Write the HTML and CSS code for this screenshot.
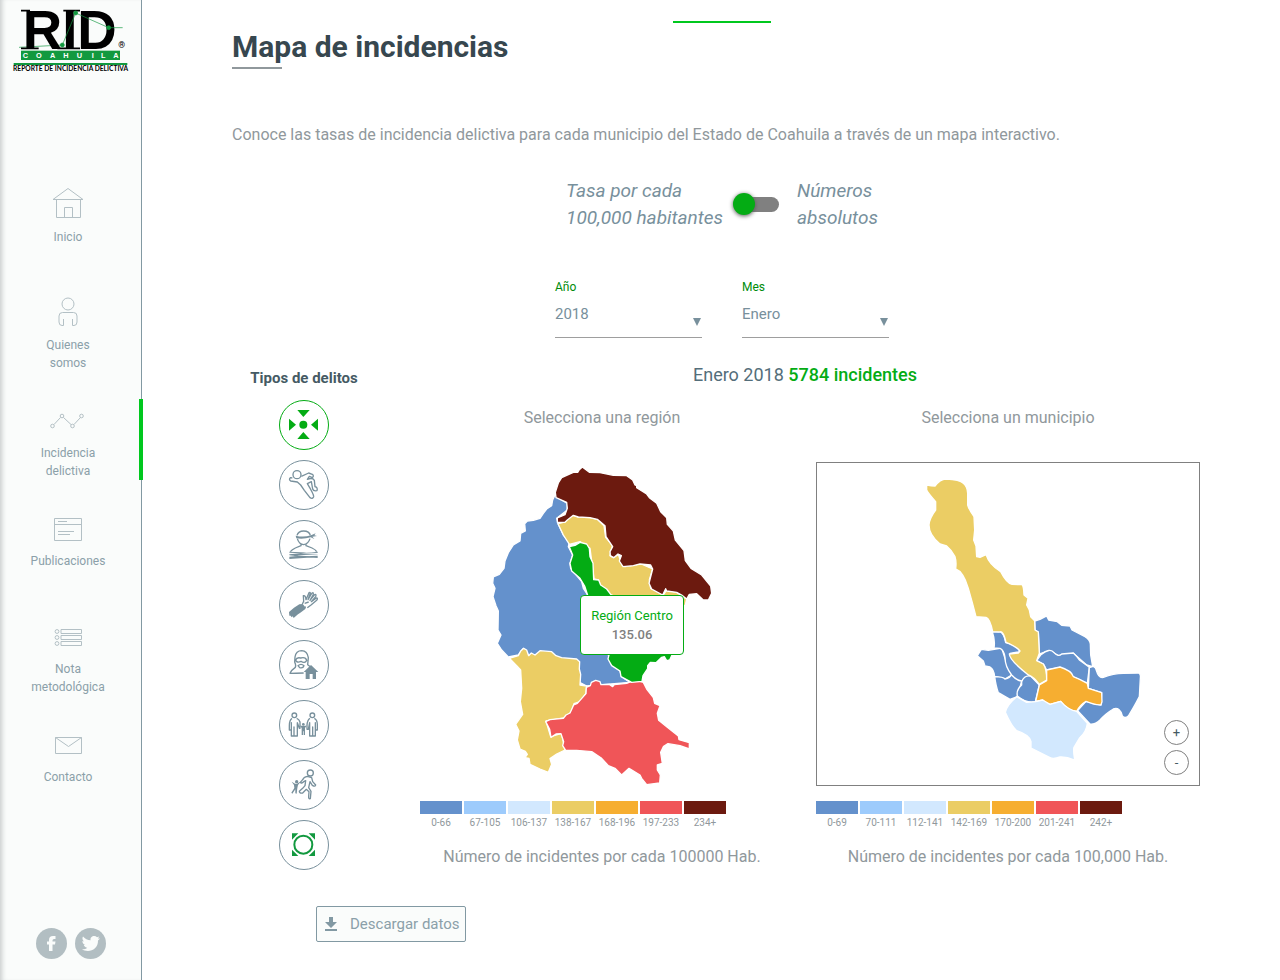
FILE: index.html
```html
<!DOCTYPE html>
<html lang="es">
<head>
<meta charset="utf-8">
<meta name="viewport" content="width=device-width, initial-scale=1">
<title>RID Coahuila - Mapa de incidencias</title>
<link rel="stylesheet" href="styles.css">
</head>
<body>
<div class="layout">
  <aside class="sidebar">
    <a class="logo" href="#" aria-label="RID Coahuila">
      <svg viewBox="0 0 420 240">
        <g class="logo-trend">
          <path d="M57 142L187 135" fill="none"/>
        </g>
        <text class="logo-name" x="68" y="147">RID</text>
        <path class="logo-serif" d="M63 32H90M63 145H116M172 145H206M190 32H240M190 145H240"/>
        <g class="logo-trend">
          <path d="M187 135L227 39L326 83H368" fill="none"/>
          <circle cx="187" cy="135" r="6"/><circle cx="227" cy="39" r="6"/><circle cx="326" cy="83" r="6"/>
        </g>
        <text class="logo-mark" x="355" y="143">®</text>
        <rect class="logo-band" x="63" y="152" width="297" height="28"/>
        <text class="logo-state" x="68 108 150 190 230 275 303 340" y="174">COAHUILA</text>
        <rect class="logo-band" x="41" y="189" width="341" height="6"/>
        <text class="logo-tagline" x="212" y="214">REPORTE DE INCIDENCIA DELICTIVA</text>
      </svg>
    </a>
    <nav class="nav">
      <a class="nav-item" href="#"><svg viewBox="0 0 36 36"><path d="M3 12.500L18 1.500L33 12.500ZM6.500 13V30.500H30.500V13M14.500 30V20.500H22.500V30"/></svg><span>Inicio</span></a>
      <a class="nav-item" href="#"><svg viewBox="0 0 36 36"><circle cx="18" cy="9" r="6"/><path d="M13.500 24V30.500H12Q9 30.500 9 27V21Q9 17.500 12.500 17.500H23.500Q27 17.500 27 21V27Q27 30.500 24 30.500H22.500V24"/></svg><span>Quienes<br>somos</span></a>
      <a class="nav-item active" href="#"><svg viewBox="0 0 36 36"><path d="M4 21.500L10.500 14.500M13.500 14.500L21 21.500M24 21.500L30.500 14.500"/><circle cx="2.500" cy="23" r="1.800"/><circle cx="12" cy="13" r="1.800"/><circle cx="22.500" cy="23" r="1.800"/><circle cx="31.500" cy="13" r="1.800"/></svg><span>Incidencia<br>delictiva</span></a>
      <a class="nav-item" href="#"><svg viewBox="0 0 36 36"><path d="M4.500 7.500H31.500V29.500H4.500ZM4.500 13.500H31.500M8 10.500H17M8 20.500H24M8 23.500H20"/></svg><span>Publicaciones</span></a>
      <a class="nav-item" href="#"><svg viewBox="0 0 36 36"><circle cx="7" cy="12.500" r="1.900"/><circle cx="7" cy="18.500" r="1.900"/><circle cx="7" cy="24.500" r="1.900"/><path d="M11 10.500H31.500V14.500H11ZM11 16.500H31.500V20.500H11ZM11 22.500H31.500V26.500H11Z"/></svg><span>Nota<br>metodológica</span></a>
      <a class="nav-item" href="#"><svg viewBox="0 0 36 36"><path d="M5.500 10.500H31.500V26.500H5.500ZM5.500 10.500L18.500 19.500L31.500 10.500"/></svg><span>Contacto</span></a>
    </nav>
    <div class="social">
      <a href="#" aria-label="Facebook"><svg viewBox="0 0 31 31"><path d="M13 23V16.500H11V13.500H13V12Q13 8 17 8H19.500V11H18Q16.500 11 16.500 12.500V13.500H19.500L19 16.500H16.500V23Z"/></svg></a>
      <a href="#" aria-label="Twitter"><svg viewBox="0 0 31 31"><path d="M25 10.500L23 12.500C23.300 19 18 23 13 23C10.500 23 8.500 22.300 7 21.300C9.200 21.400 11 20.800 12.300 19.700C10.500 19.500 9.300 18.500 8.800 17H10.400C8.500 16.400 7.400 15 7.400 13L9 13.400C7.300 12 7 10.200 8 8.500C10 10.800 12.500 12.200 15.600 12.300C15 9.800 17 8 19.200 8C20.300 8 21.200 8.400 22 9.200L24.300 8.400L22.900 10.500Z"/></svg></a>
    </div>
  </aside>

  <main class="main">
    <div class="section-marker"></div>
    <h1 class="title">Mapa de incidencias</h1>
    <p class="intro">Conoce las tasas de incidencia delictiva para cada municipio del Estado de Coahuila a través de un mapa interactivo.</p>

    <div class="measure">
      <label for="measure">Tasa por cada<br>100,000 habitantes</label>
      <input class="switch" type="checkbox" role="switch" id="measure">
      <label for="measure">Números<br>absolutos</label>
    </div>

    <div class="filters">
      <div class="field">
        <label for="year">Año</label>
        <select id="year"><option>2018</option><option>2017</option></select>
      </div>
      <div class="field">
        <label for="month">Mes</label>
        <select id="month"><option>Enero</option><option>Febrero</option></select>
      </div>
    </div>

    <div class="explorer">
      <section class="crimes">
        <h2>Tipos de delitos</h2>
        <button type="button" class="crime selected" aria-label="Todos"><svg viewBox="30 33 144 144"><g class="solid"><path d="M82 60H119L100 81ZM82 147H119L100 126ZM57 86V122L78 104ZM144 86V122L123 104Z"/><circle cx="100" cy="104" r="12"/></g></svg></button>
        <button type="button" class="crime" aria-label="Homicidio"><svg viewBox="30 213 144 144"><circle cx="81" cy="254" r="12"/><path d="M67 264L62 263Q55 268 62 273L82 276L92 285L103 301L120 323Q128 328 131 320Q132 314 112 281L124 275L128 297Q130 304 141 302Q144 292 135 290L133 271Q128 262 112 268L118 259L127 263Q133 258 127 253L116 249L94 259"/></svg></button>
        <button type="button" class="crime" aria-label="Secuestro"><svg viewBox="30 393 144 144"><path d="M81 436Q85 423 101 423Q118 423 121 436M82 446Q87 463 101 464Q115 462 120 446M93 462V467L76 474Q66 479 61 485M108 462V467L126 474Q137 479 140 485"/><g class="solid"><path d="M77 437Q101 443 123 436L137 430L133 436L141 438L127 440L133 447L122 442Q101 448 79 445Z"/><path d="M58 485L143 489V492L58 488ZM143 485L58 493V497L143 493ZM58 495L143 500V504L58 499ZM58 501L143 497V501L58 507Z"/></g></svg></button>
        <button type="button" class="crime" aria-label="Robo"><svg viewBox="30 573 144 144"><path class="solid" d="M57 666L72 653L88 643L98 642L105 650Q111 646 106 657L91 668L84 673L71 684L68 679L65 682L62 677L58 677Z"/><path d="M97 642L101 634L100 617Q107 615 108 629L117 608Q124 606 119 615L114 629L126 609Q132 606 129 615L120 631L134 614Q140 612 137 620L124 635L139 624Q145 624 140 631L124 644L112 653M104 640L116 636"/></svg></button>
        <button type="button" class="crime" aria-label="Robo a casa habitación"><svg viewBox="30 33 144 144"><path d="M101 129Q77 130 60 130Q64 120 76 112Q79 107 74 96L75 81Q78 62 95 62Q112 63 115 83L113 104L121 110M77 90Q80 81 92 84Q107 80 110 91Q104 102 93 94Q80 100 77 90ZM84 107Q93 99 102 107Q99 116 89 113Z"/><path class="solid" d="M123 105L145 126H138V147H128V132H119V147H107V126H101Z"/></svg></button>
        <button type="button" class="crime" aria-label="Violencia familiar"><svg viewBox="30 213 144 144"><circle cx="73" cy="256" r="7"/><circle cx="127" cy="256" r="7"/><path d="M66 265Q58 270 58 287V300H64V278V318H72V291V318H82V278L88 295H90V276Q87 267 80 265M120 265Q112 269 111 286V298H115L119 278V318H128V291V318H136V278V300H142V282Q141 269 133 265"/><circle class="solid" cx="100" cy="283" r="4"/><path class="solid" d="M90 287H110L105 294V315H101V304H99V315H95V294Z"/></svg></button>
        <button type="button" class="crime" aria-label="Sustracción de menores"><svg viewBox="30 393 144 144"><circle cx="121" cy="429" r="9"/><path d="M112 439Q101 441 98 449L91 457Q94 462 101 455L107 452L105 467L98 475L88 484Q88 491 98 489L109 478L117 485L116 499Q115 508 121 506L123 484L116 473L120 455L127 466Q136 471 137 465L128 455L125 443Z"/><g class="solid"><circle cx="80" cy="455" r="5"/><path d="M65 455L75 461H81L93 454L84 465L82 474L80 491L76 490L76 478L67 491L64 488L73 474L72 465Z"/></g></svg></button>
        <button type="button" class="crime other" aria-label="Otros delitos"><svg viewBox="30 573 144 144"><circle cx="100" cy="644" r="27"/><path class="solid" d="M66 610H85L66 629ZM116 610H135V629ZM66 659V678H85ZM135 659V678H116Z"/></svg></button>
      </section>

      <section class="results">
        <h2 class="summary">Enero 2018 <strong>5784 incidentes</strong></h2>
        <div class="maps">
          <div class="panel regions">
            <h3>Selecciona una región</h3>
            <div class="canvas">
              <svg class="map" viewBox="-180 21 1092 972">
                <path class="c1" d="M226 118L218 135L215 152L200 162L190 175L180 190L160 196L142 198L134 206L136 228L122 235L120 258L100 270L85 293L75 318L72 340L58 358L40 366L38 385L45 400L39 425L48 452L55 468L54 525L63 540L52 565L65 585L85 606L115 600L130 580L145 600L320 693L450 682L425 665L420 648L395 630L385 600L350 500L322 418L310 400L305 380L290 362L272 340L270 325L278 300L265 275L268 262L250 240L235 208L230 190L262 165L262 145L240 132Z"/>
                <path class="c4" d="M88 610L115 602L122 588L131 580L140 585L146 602L154 594L165 600L180 587L215 590L228 602L245 608L290 612L299 620L298 642L302 658L300 690L320 693L318 715L300 740L282 746L275 770L255 788L198 798L212 845L245 835L255 885L230 897L210 911L215 928L205 952L180 942L150 928L147 910L135 908L142 898L136 889L120 882L112 855L117 828L107 808L128 778L121 740L125 700L122 645L110 632Z"/>
                <path class="c6" d="M197 800L210 794L250 790L258 780L270 774L281 750L292 745L318 716L319 697L331 692L334 682L347 676L360 680L363 689L388 688L398 695L403 689L440 685L458 678L470 676L490 682L500 702L520 728L524 745L540 752L532 775L536 796L560 815L595 843L597 854L628 863L628 882L600 872L564 866L550 875L542 892L547 925L532 930V945L541 960L539 984L500 989L485 970L480 960L447 940L425 960L405 940L385 932L365 910L335 890L290 886L257 886L248 872L251 860L243 836L228 837L213 847L209 823Z"/>
                <path class="c4" d="M234 206L247 203L260 188L280 181L295 186L330 188L352 193L372 212L377 247L398 272L390 302L400 308L415 298L425 328L435 335L465 330L480 325L518 342L508 375L512 400L550 420L560 405L590 412L620 432L616 450L605 460L550 510L400 450L390 418L362 392L355 375L342 372L330 280L300 260L268 268L250 240Z"/>
                <path class="sel" d="M268 275L285 271L300 262L320 267L328 280L330 305L339 325L341 374L356 375L362 390L380 402L392 418L480 470L580 540L576 600L569 615L560 617L553 605L545 607L528 623L511 622L503 632V641L489 662L486 679L455 682L423 665L420 648L395 632L384 612L388 595L350 500L322 418L314 393L300 370L275 348L270 325L278 300Z"/>
                <path class="c7" d="M226 112L235 84L245 68L280 52L293 52L298 44L307 36L328 52L360 53L400 61L440 62L458 75L465 90L470 92V98L500 117L508 128L530 145L542 170L560 188L562 208L580 228L586 255L612 287L616 317L633 340L665 360L692 393L695 415L685 435L670 435L650 416L628 418L620 432L605 420L590 412L560 408L557 401L548 420L515 402L507 385L518 342L512 330L480 327L460 332L429 335L418 318L424 302L414 297L401 308L391 302L390 290L398 275L378 245L375 212L352 193L330 188L295 186L280 181L262 195L255 202L232 202V189L255 179L262 160L260 142L228 128Z"/>
              </svg>
              <div class="tooltip"><span>Región Centro</span><strong>135.06</strong></div>
            </div>
            <ul class="legend">
              <li class="k1">0-66</li><li class="k2">67-105</li><li class="k3">106-137</li><li class="k4">138-167</li><li class="k5">168-196</li><li class="k6">197-233</li><li class="k7">234+</li>
            </ul>
            <p class="caption">Número de incidentes por cada 100000 Hab.</p>
          </div>

          <div class="panel towns">
            <h3>Selecciona un municipio</h3>
            <div class="canvas framed">
              <svg class="map" viewBox="-249 9 1146 966">
                <path class="c1" d="M404 483L420 478L440 468L446 480L472 485L485 496L510 498L516 510L555 530Q570 540 571 552L572 585L578 620L560 615L520 580L475 587L450 572L418 582L415 516L405 510Z"/>
                <path class="c1" d="M410 602L423 584Q450 562 462 578Q475 592 485 582L520 579Q532 590 538 600L568 622L562 670L518 650L480 622L440 630L430 612Z"/>
                <path class="c1" d="M568 623L580 619Q588 622 590 634Q596 655 610 652Q640 640 670 640L715 639Q723 642 721 655L718 710Q700 745 685 768Q675 777 667 768Q660 740 640 747Q615 762 600 780Q585 794 570 792L533 752L558 724L603 735L605 698L565 685Z"/>
                <path class="c1" d="M232 587L244 568L265 571L305 564L318 605L335 645L315 657L284 650Q282 628 270 621L255 618L250 603Z"/>
                <path class="c1" d="M284 650Q310 650 315 657Q330 655 335 643L365 663L352 710L330 718L295 698Q288 680 284 650Z"/>
                <path class="c1" d="M277 516L300 515Q312 520 317 548Q350 555 360 575L330 580L335 595L392 646L365 663Q350 662 335 645Q315 620 315 592Q312 570 300 565L282 564Q286 540 277 516Z"/>
                <path class="c1" d="M365 665Q373 645 392 648L418 675L406 725Q380 731 352 708Q348 690 365 675Z"/>
                <path class="c4" d="M80 75Q95 78 105 78Q120 58 138 57Q180 58 190 70Q202 80 203 100V135Q207 149 222 170L224 210L221 240L228 258L230 290L240 292L258 284Q268 315 302 335Q320 370 336 373L366 374Q371 378 372 405L384 415L380 435L388 450L392 470L404 482L405 510L415 516L418 580L410 602L430 612Q440 625 440 660L418 673Q400 650 385 645Q328 600 328 582L355 579L360 573Q350 560 318 547Q310 510 298 516L278 515Q270 475 258 472L228 470Q218 430 205 385Q190 335 167 327Q170 305 165 290Q155 270 140 258L120 252Q87 225 87 195Q88 175 107 150V125Q85 100 80 90Z"/>
                <path class="c5" d="M440 630L480 621Q515 632 520 650Q540 658 562 670L565 685L605 698L606 725L603 734Q590 737 558 724Q540 735 530 754Q500 750 482 724L450 733Q440 732 428 720L407 724L418 675L440 662Z"/>
                <path class="c3" d="M350 710L380 727L407 725L428 720L450 733L482 724Q505 750 530 754L562 790Q560 815 538 835L522 862Q519 870 524 900Q500 890 480 891Q460 898 450 893L393 864V845Q390 825 350 812Q335 800 316 757Q320 735 350 710Z"/>
              </svg>
              <div class="zoom"><button type="button" aria-label="Acercar">+</button><button type="button" aria-label="Alejar">-</button></div>
            </div>
            <ul class="legend">
              <li class="k1">0-69</li><li class="k2">70-111</li><li class="k3">112-141</li><li class="k4">142-169</li><li class="k5">170-200</li><li class="k6">201-241</li><li class="k7">242+</li>
            </ul>
            <p class="caption">Número de incidentes por cada 100,000 Hab.</p>
          </div>
        </div>
      </section>
    </div>

    <button type="button" class="download"><svg viewBox="0 0 14 16"><path d="M5 1H9V6H13L7 12L1 6H5ZM1 13H13V15H1Z"/></svg><span>Descargar datos</span></button>
  </main>
</div>
</body>
</html>
```

FILE: styles.css
```css
* { box-sizing: border-box; }

body {
  margin: 0;
  font-family: Roboto, "Liberation Sans", sans-serif;
  font-size: 16px;
  color: #90989c;
  background: #fff;
}

h1, h2, h3, p, ul { margin: 0; padding: 0; }
ul { list-style: none; }
button, select { font-family: inherit; }
a { text-decoration: none; }

.layout { display: flex; min-height: 100vh; }

/* Sidebar */
.sidebar {
  flex: 0 0 142px;
  min-width: 0;
  display: flex;
  flex-direction: column;
  background: #fafcfb;
  border-right: 1px solid #8299a3;
  box-shadow: inset 5px 0 5px -3px #c8cccc;
}
.logo svg { display: block; width: 140px; height: 80px; overflow: visible; }
.logo-name { font: bold 164px "Liberation Sans", sans-serif; fill: #000; }
.logo-serif { stroke: #000; stroke-width: 5; }
.logo-mark { font: bold 26px Roboto, sans-serif; fill: #000; }
.logo-trend { fill: #12993f; stroke: #12993f; stroke-width: 2; }
.logo-band { fill: #12993f; }
.logo-state { font: bold 22px "Liberation Sans", sans-serif; fill: #fff; }
.logo-tagline { font: bold 20px Lato, sans-serif; fill: #000; text-anchor: middle; }

.nav {
  display: flex;
  flex-direction: column;
  gap: 27px;
  margin-top: 103px;
}
.nav-item {
  position: relative;
  display: flex;
  flex-direction: column;
  align-items: center;
  gap: 5px;
  height: 81px;
  padding: 4px 5px 0 0;
  font-size: 12px;
  line-height: 18px;
  text-align: center;
  color: #8ba0a9;
}
.nav-item svg { width: 36px; height: 36px; fill: none; stroke: #b3c0c5; stroke-width: 1; }
.nav-item.active::after {
  content: "";
  position: absolute;
  top: 0;
  right: -2px;
  width: 4px;
  height: 81px;
  background: #00c81e;
}

.social { display: flex; gap: 8px; justify-content: center; margin-top: auto; padding-bottom: 21px; }
.social a { width: 31px; height: 31px; border-radius: 50%; background: #b2bec2; }
.social svg { display: block; fill: #fafcfb; }

/* Main column */
.main { flex: 1; min-width: 0; padding: 21px 68px 38px 90px; }
.section-marker { width: 98px; height: 2px; margin: 0 auto; background: #00c81e; }
.title {
  margin-top: 4px;
  font-size: 30px;
  line-height: 40px;
  font-weight: 700;
  color: #37474f;
}
.title::after { content: ""; display: block; width: 50px; height: 2px; background: #90989c; }
.intro { margin-top: 54px; line-height: 24px; }

.measure {
  display: flex;
  justify-content: center;
  align-items: center;
  margin-top: 30px;
  font-size: 19px;
  line-height: 27px;
  font-style: italic;
  color: #78909c;
}
.switch {
  appearance: none;
  position: relative;
  width: 42px;
  height: 15px;
  margin: 0 18px 0 14px;
  border-radius: 8px;
  background: #808080;
}
.switch::before {
  content: "";
  position: absolute;
  top: -4px;
  left: -4px;
  width: 22px;
  height: 22px;
  border-radius: 50%;
  background: #04ac14;
  box-shadow: 0 1px 4px #555;
}
.switch:checked::before { left: 24px; }

.filters { display: flex; justify-content: center; gap: 40px; margin-top: 47px; }
.field { position: relative; width: 147px; }
.field label { display: block; font-size: 12px; line-height: 18px; color: #008c0a; }
.field select {
  appearance: none;
  display: block;
  width: 100%;
  height: 42px;
  padding: 0 20px 6px 0;
  border: 0;
  border-bottom: 1px solid #9e9e9e;
  border-radius: 0;
  background: transparent;
  font-size: 15px;
  line-height: 24px;
  color: #78909c;
}
.field::after {
  content: "";
  position: absolute;
  right: 1px;
  bottom: 12px;
  border: 4px solid transparent;
  border-top: 8px solid #78909c;
  border-bottom: 0;
  pointer-events: none;
}

/* Crime types and maps */
.explorer {
  display: grid;
  grid-template-columns: 144px 1fr;
  gap: 28px;
  margin-top: 25px;
  padding-right: 6px;
}
.crimes { display: flex; flex-direction: column; align-items: center; gap: 10px; padding-top: 5px; }
.crimes h2 { font-size: 15px; line-height: 20px; margin-bottom: 2px; color: #455a64; white-space: nowrap; }
.crime {
  width: 50px;
  height: 50px;
  padding: 0;
  border: 1px solid #78909c;
  border-radius: 50%;
  background: #fff;
  color: #78909c;
}
.crime svg { display: block; fill: none; stroke: currentColor; stroke-width: 4; stroke-linejoin: round; }
.crime .solid { fill: currentColor; stroke: none; }
.crime.selected { border-color: #04ac14; color: #04ac14; }
.crime.other svg { color: #12993f; stroke-width: 6; }

.results { min-width: 0; }
.summary { font-size: 18px; line-height: 24px; font-weight: 400; text-align: center; color: #546e7a; }
.summary strong { font-weight: 500; color: #04ac14; }
.maps { display: grid; grid-template-columns: 1fr 1fr; gap: 10px; margin-top: 19px; }
.panel { min-width: 0; }
.regions { padding: 0 16px; }
.towns { padding: 0 6px; }
.panel h3 { font-size: 16px; line-height: 24px; font-weight: 400; text-align: center; }
.canvas { position: relative; height: 324px; margin-top: 32px; }
.framed { border: 1px solid #808080; }
.map { display: block; width: 100%; height: 100%; stroke: #fff; stroke-width: 4; stroke-linejoin: round; }
.c1 { fill: #6491cc; }
.c3 { fill: #d2e8fe; }
.c4 { fill: #ebcd64; }
.c5 { fill: #f6ae31; }
.c6 { fill: #f05558; }
.c7 { fill: #6c1a0f; }
.sel { fill: #04ac14; }
.tooltip {
  position: absolute;
  left: 160px;
  top: 133px;
  width: 104px;
  padding: 10px 0;
  border: 1px solid #04ac14;
  border-radius: 4px;
  background: #fff;
  text-align: center;
  font-size: 13px;
  line-height: 19px;
  color: #04ac14;
}
.tooltip span, .tooltip strong { display: block; }
.tooltip strong { font-weight: 500; color: #808080; }
.zoom { position: absolute; right: 10px; bottom: 10px; display: grid; gap: 5px; }
.zoom button {
  width: 25px;
  height: 25px;
  padding: 0;
  border: 1px solid #808080;
  border-radius: 50%;
  background: #fff;
  font-size: 13px;
  color: #455a64;
}

.legend { display: grid; grid-template-columns: repeat(7, 42px); gap: 2px; margin-top: 15px; }
.legend li { font-size: 10px; line-height: 18px; text-align: center; }
.legend li::before { content: ""; display: block; height: 13px; background: currentColor; }
.k1::before { color: #6491cc; }
.k2::before { color: #9dcbfc; }
.k3::before { color: #d2e8fe; }
.k4::before { color: #ebcd64; }
.k5::before { color: #f6ae31; }
.k6::before { color: #f05558; }
.k7::before { color: #6c1a0f; }
.caption { margin-top: 13px; line-height: 24px; text-align: center; white-space: nowrap; }

.download {
  display: flex;
  align-items: center;
  gap: 12px;
  height: 36px;
  margin: 36px 0 0 84px;
  padding: 0 5px 0 7px;
  border: 1px solid #8299a3;
  border-radius: 2px;
  background: #fafcfb;
  font-size: 15px;
  color: #8ba0a9;
}
.download svg { width: 14px; height: 16px; fill: #8299a3; }
```
